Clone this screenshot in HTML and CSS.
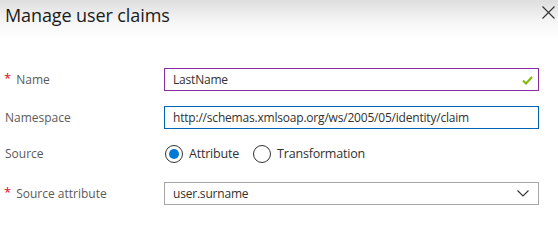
FILE: index.html
```html
<!DOCTYPE html>
<html>
<head>
	<meta charset="utf-8">
	<link rel="stylesheet" href="styles.css">
</head>
<body>
	<div class="panel">
		<div class="panel-head">
			<h1 class="panel-title">Manage user claims</h1>
			<button class="close-btn" title="Close">
				<svg width="13" height="13" viewBox="0 0 13 13"><path d="M0.5 0.5 L12.5 12.5 M12.5 0.5 L0.5 12.5" stroke="#333" stroke-width="1.1" fill="none"/></svg>
			</button>
		</div>
		<form class="claim-form">
			<label class="field-label required">Name</label>
			<div class="text-box valid">
				<span class="text-value">LastName</span>
				<svg class="check" width="11" height="9" viewBox="0 0 11 9"><path d="M1 4.5 L4 7.5 L10 1" stroke="#7fba00" stroke-width="2" fill="none"/></svg>
			</div>

			<label class="field-label">Namespace</label>
			<div class="text-box focused">
				<span class="text-value">http://schemas.xmlsoap.org/ws/2005/05/identity/claim</span>
			</div>

			<label class="field-label short">Source</label>
			<div class="radio-group">
				<span class="radio checked"></span><span class="radio-text">Attribute</span>
				<span class="radio"></span><span class="radio-text">Transformation</span>
			</div>

			<label class="field-label required">Source attribute</label>
			<div class="text-box select">
				<span class="text-value">user.surname</span>
				<svg class="chevron" width="12" height="7" viewBox="0 0 12 7"><path d="M0.5 0.5 L6 6 L11.5 0.5" stroke="#333" stroke-width="1.1" fill="none"/></svg>
			</div>
		</form>
	</div>
</body>
</html>
```

FILE: styles.css
```css
html, body {
	margin: 0;
	padding: 0;
	background: #fff;
	font-family: "Open Sans", "Noto Sans", Arial, sans-serif;
}
.panel {
	width: 558px;
	height: 246px;
	overflow: hidden;
}
.panel-head {
	display: flex;
	justify-content: space-between;
	align-items: flex-start;
	height: 40px;
	padding: 0 0 0 5px;
	background: linear-gradient(#dedede, #f6f6f6 22px, #fff 40px);
}
.panel-title {
	margin: 0;
	padding-top: 1px;
	font-size: 18px;
	font-weight: normal;
	line-height: 28px;
	color: #1a1a1a;
	letter-spacing: -0.1px;
}
.close-btn {
	border: 0;
	background: none;
	padding: 0;
	margin: 6px 3px 0 0;
	width: 13px;
	height: 13px;
	display: flex;
}
.claim-form {
	display: grid;
	grid-template-columns: 164px 375px;
	grid-auto-rows: 23px;
	row-gap: 15px;
	margin-top: 28px;
	font-size: 12px;
}
.field-label {
	display: flex;
	align-items: center;
	padding-left: 5px;
	color: #5a5a5a;
}
.field-label.short {
	align-self: start;
	height: 19px;
}
.field-label.required::before {
	content: "*";
	color: #e00b1c;
	font-size: 13px;
	margin: -4px 5px 0 -1px;
}
.text-box {
	display: flex;
	align-items: center;
	justify-content: space-between;
	border: 1px solid #a6a6a6;
	box-sizing: border-box;
	padding: 0 8px 0 8px;
	color: #323130;
}
.text-value {
	letter-spacing: -0.2px;
}
.text-box.valid {
	border-color: #8a2da5;
}
.text-box.focused {
	border: 1px solid #0063b1;
}
.text-box.select {
	padding-right: 9px;
}
.check {
	margin-top: 1px;
	margin-right: -3px;
}
.radio-group {
	display: flex;
	align-items: center;
	align-self: start;
	height: 19px;
	color: #323130;
}
.radio {
	width: 16px;
	height: 16px;
	border: 1px solid #333;
	border-radius: 50%;
	position: relative;
	margin-left: 1px;
}
.radio.checked::after {
	content: "";
	position: absolute;
	left: 3px;
	top: 3px;
	width: 10px;
	height: 10px;
	border-radius: 50%;
	background: #0078d4;
}
.radio-text {
	margin: 0 13px 0 6px;
	font-size: 12.5px;
	letter-spacing: -0.2px;
}
```
